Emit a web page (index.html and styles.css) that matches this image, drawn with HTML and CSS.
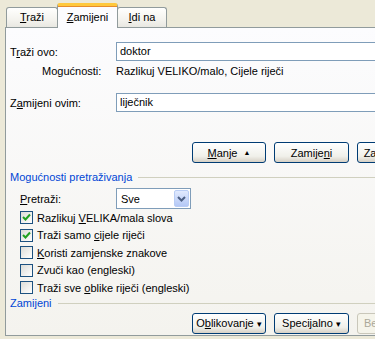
FILE: index.html
```html
<!DOCTYPE html>
<html>
<head>
    <title>Traži i zamijeni</title>
    <link rel="stylesheet" href="styles.css">
</head>
<body>
    <div class="dialog">
        <div class="tabs">
            <div class="tab tab-first"><u>T</u>raži</div>
            <div class="tab active"><u>Z</u>amijeni</div>
            <div class="tab"><u>I</u>di na</div>
        </div>
        <div class="page">
            <div class="row row-find">
                <label class="label">T<u>r</u>aži ovo:</label>
                <div class="field">doktor</div>
            </div>
            <div class="row row-opts">
                <span class="label label-sub">Mogućnosti:</span>
                <span class="opts-text">Razlikuj VELIKO/malo, Cijele riječi</span>
            </div>
            <div class="row row-replace">
                <label class="label">Z<u>a</u>mijeni ovim:</label>
                <div class="field">liječnik</div>
            </div>
            <div class="buttons buttons-top">
                <button class="btn"><u>M</u>anje &nbsp;<span class="up">&#9650;</span></button>
                <button class="btn">Zamije<u>n</u>i</button>
                <button class="btn">Zamijeni sve</button>
            </div>

            <div class="group-title"><span>Mogućnosti pretraživanja</span></div>
            <div class="group">
                <div class="row row-search">
                    <label class="label label-short"><u>P</u>retraži:</label>
                    <div class="select">
                        <span>Sve</span>
                        <span class="select-btn">
                            <svg width="9" height="6" viewBox="0 0 9 6"><path d="M1 1 L4.5 4.5 L8 1" fill="none" stroke="#4d6185" stroke-width="2"/></svg>
                        </span>
                    </div>
                </div>
                <div class="check"><span class="box on"><svg width="9" height="9" viewBox="0 0 9 9"><path d="M1 4 L3.5 6.5 L8 1.5" fill="none" stroke="#21a121" stroke-width="2"/></svg></span><span>Razlikuj <u>V</u>ELIKA/mala slova</span></div>
                <div class="check"><span class="box on"><svg width="9" height="9" viewBox="0 0 9 9"><path d="M1 4 L3.5 6.5 L8 1.5" fill="none" stroke="#21a121" stroke-width="2"/></svg></span><span>Traži samo <u>c</u>ijele riječi</span></div>
                <div class="check"><span class="box"></span><span><u>K</u>oristi zamjenske znakove</span></div>
                <div class="check"><span class="box"></span><span>Zvuči kao (engleski)</span></div>
                <div class="check"><span class="box"></span><span>Traži sve <u>o</u>blike riječi (engleski)</span></div>
            </div>

            <div class="group-title group-title-2"><span>Zamijeni</span></div>
            <div class="buttons buttons-bottom">
                <button class="btn">O<u>b</u>likovanje <span class="down">&#9662;</span></button>
                <button class="btn">Speci<u>j</u>alno <span class="down">&#9662;</span></button>
                <button class="btn" disabled>Bez oblikovanja</button>
            </div>
        </div>
    </div>
</body>
</html>
```
FILE: styles.css
```css
html, body {
    margin: 0;
    padding: 0;
    overflow: hidden;
}
body {
    width: 375px;
    height: 339px;
    background-color: #ece9d8;
    font-family: "Liberation Sans", Arial, sans-serif;
    font-size: 11px;
    color: #000;
}
u {
    text-decoration: underline;
    text-underline-offset: 1px;
}
.dialog {
    padding-top: 3px;
    padding-left: 5px;
}
.tabs {
    display: flex;
    align-items: flex-end;
    height: 24px;
    padding-left: 1px;
}
.tab {
    height: 20px;
    line-height: 19px;
    text-align: center;
    border: 1px solid #919b9c;
    border-bottom: none;
    border-radius: 3px 3px 0 0;
    background: linear-gradient(#fffffe, #f4f3ee 60%, #e9e8e2);
    box-sizing: border-box;
}
.tab-first {
    width: 52px;
}
.tab:nth-child(3) {
    width: 50px;
    margin-left: -1px;
}
.tab.active {
    width: 61px;
    height: 25px;
    line-height: 22px;
    margin-left: -1px;
    background: #fcfcfe;
    border-top: 3px solid #ffc83c;
    position: relative;
    z-index: 1;
    margin-bottom: -1px;
    box-shadow: inset 0 1px 0 #e68b2c;
}
.page {
    width: 420px;
    height: 309px;
    border: 1px solid #919b9c;
    background: linear-gradient(#fcfcfe, #f4f3ee);
    padding-left: 4px;
    box-sizing: border-box;
    overflow: hidden;
}
.row {
    display: flex;
    align-items: center;
}
.label {
    width: 106px;
    flex: none;
}
.label-sub {
    padding-left: 32px;
    box-sizing: border-box;
}
.label-short {
    width: 96px;
}
.field {
    width: 300px;
    height: 19px;
    border: 1px solid #7f9db9;
    background: #fff;
    box-sizing: border-box;
    padding-left: 3px;
    line-height: 17px;
}
.row-find {
    margin-top: 14px;
}
.row-opts {
    height: 13px;
    margin-top: 3px;
}
.row-replace {
    margin-top: 16px;
}
.buttons {
    display: flex;
    gap: 8px;
    padding-left: 182px;
}
.buttons-top {
    margin-top: 30px;
}
.btn {
    flex: none;
    width: 75px;
    height: 21px;
    padding: 0;
    font-family: "Liberation Sans", Arial, sans-serif;
    font-size: 11px;
    color: #000;
    border: 1px solid #003c74;
    border-radius: 3px;
    background: linear-gradient(#ffffff, #f0f0ea 70%, #d6d0c5);
    white-space: nowrap;
    overflow: hidden;
    text-align: center;
}
.btn:first-child {
    width: 74px;
}
.btn[disabled] {
    color: #aca899;
    border-color: #c9c7ba;
    background: #f5f4ea;
    text-align: left;
    padding-left: 6px;
}
.up {
    font-size: 7px;
    vertical-align: 2px;
}
.down {
    font-size: 9px;
}
.group-title {
    display: flex;
    align-items: center;
    color: #0046d5;
    margin-top: 7px;
    height: 13px;
}
.group-title::after {
    content: "";
    flex: 1;
    border-top: 1px solid #d0d0bf;
    margin-left: 6px;
    margin-top: 1px;
}
.group {
    padding-left: 10px;
}
.row-search {
    margin-top: 5px;
}
.select {
    display: flex;
    align-items: center;
    justify-content: space-between;
    width: 75px;
    height: 21px;
    border: 1px solid #7f9db9;
    background: #fff;
    box-sizing: border-box;
    padding: 1px 1px 1px 4px;
}
.select-btn {
    width: 15px;
    height: 17px;
    border: 1px solid #b9cdf5;
    border-radius: 2px;
    box-sizing: border-box;
    background: linear-gradient(#e1eafe, #b4c8f6);
    display: flex;
    align-items: center;
    justify-content: center;
}
.check {
    display: flex;
    align-items: center;
    height: 17.5px;
}
.check:first-of-type {
    margin-top: 2px;
}
.box {
    width: 13px;
    height: 13px;
    flex: none;
    border: 1px solid #1c5180;
    box-sizing: border-box;
    background: linear-gradient(135deg, #dcdcd7, #ffffff);
    margin-right: 4px;
    display: flex;
    align-items: center;
    justify-content: center;
}
.group-title-2 {
    margin-top: 0;
}
.buttons-bottom {
    margin-top: 3px;
}
```
